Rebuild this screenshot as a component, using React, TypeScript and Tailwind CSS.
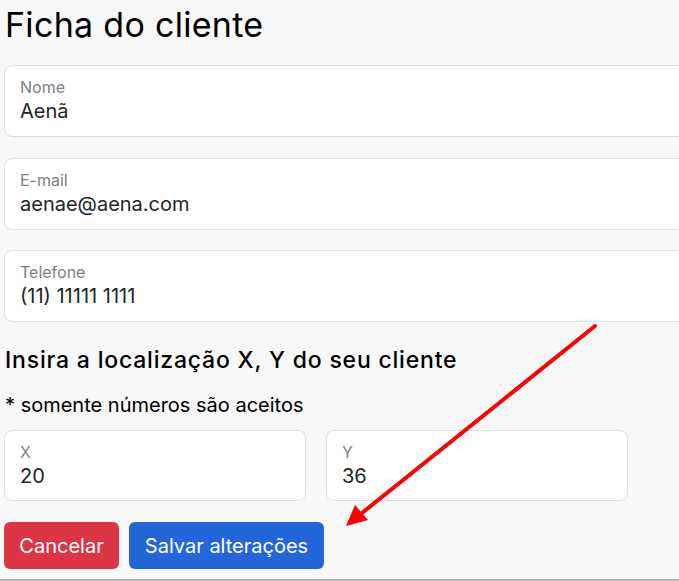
import React from "react";

function Field({ label, value, className }: { label: string; value: string; className: string }) {
  return (
    <div className={`flex shrink-0 flex-col rounded-[8px] border border-[#dee2e6] bg-white pl-[15px] pt-[12px] ${className}`}>
      <span className="text-[16px] leading-[18px] text-[#7b8087]">{label}</span>
      <span className="mt-[3px] text-[20px] leading-[24px] text-[#212529]">{value}</span>
    </div>
  );
}

export default function App() {
  return (
    <div
      className="relative h-[581px] w-[679px] overflow-hidden bg-[#f8f8f8]"
      style={{ fontFamily: "Inter, 'Noto Sans', sans-serif" }}
    >
      <div className="flex flex-col pl-[4px]">
        <h1 className="mt-[4px] pl-[1px] text-[34px] leading-[41px] font-normal tracking-[0.3px] text-black">
          Ficha do cliente
        </h1>
        <div className="mt-[20px] flex flex-col gap-[20.5px]">
          <Field label="Nome" value="Aenã" className="h-[72px] w-[720px]" />
          <Field label="E-mail" value="aenae@aena.com" className="h-[72px] w-[720px]" />
          <Field label="Telefone" value="(11) 11111 1111" className="h-[72px] w-[720px]" />
        </div>
        <h2 className="mt-[24px] pl-[1px] text-[23px] leading-[28px] font-medium tracking-[0.8px] text-black">
          Insira a localização X, Y do seu cliente
        </h2>
        <p className="mt-[19px] pl-[1px] text-[20px] leading-[24px] text-black">* somente números são aceitos</p>
        <div className="mt-[13px] flex gap-[20px]">
          <Field label="X" value="20" className="h-[71px] w-[302px]" />
          <Field label="Y" value="36" className="h-[71px] w-[302px]" />
        </div>
        <div className="mt-[21px] flex gap-[10px]">
          <button className="h-[47px] w-[115px] rounded-[6px] bg-[#dc3545] text-[20px] text-white">Cancelar</button>
          <button className="h-[47px] w-[195px] rounded-[6px] bg-[#2366d9] text-[20px] text-white">Salvar alterações</button>
        </div>
      </div>
      <div className="absolute bottom-0 left-0 h-[2px] w-full bg-[#b4b4b4]" />
      <svg className="pointer-events-none absolute left-0 top-0" width="679" height="581">
        <line x1="595" y1="326" x2="362" y2="513" stroke="#ff0000" strokeWidth="4" strokeLinecap="round" />
        <polygon points="346,526 355,505 368,520" fill="#ff0000" />
      </svg>
    </div>
  );
}
